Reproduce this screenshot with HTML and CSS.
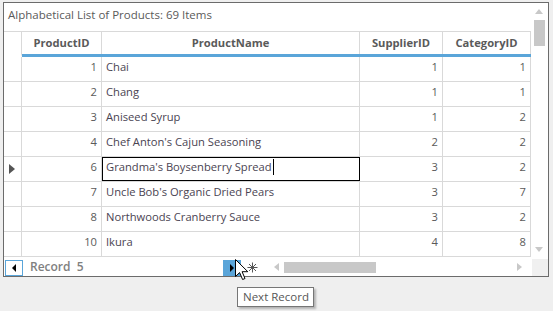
FILE: index.html
```html
<!DOCTYPE html>
<html lang="en">
<head>
    <meta charset="UTF-8">
    <title>Alphabetical List of Products</title>
    <link rel="stylesheet" href="styles.css">
</head>
<body>
    <div class="window">
        <div class="main">
            <div class="grid-area">
                <div class="caption">Alphabetical List of Products: 69 Items</div>

                <div class="row header">
                    <div class="cell c-sel"></div>
                    <div class="cell c-id">ProductID</div>
                    <div class="cell c-name">ProductName</div>
                    <div class="cell c-sup">SupplierID</div>
                    <div class="cell c-cat">CategoryID</div>
                </div>

                <div class="row">
                    <div class="cell c-sel"></div>
                    <div class="cell c-id">1</div>
                    <div class="cell c-name">Chai</div>
                    <div class="cell c-sup">1</div>
                    <div class="cell c-cat">1</div>
                </div>
                <div class="row">
                    <div class="cell c-sel"></div>
                    <div class="cell c-id">2</div>
                    <div class="cell c-name">Chang</div>
                    <div class="cell c-sup">1</div>
                    <div class="cell c-cat">1</div>
                </div>
                <div class="row">
                    <div class="cell c-sel"></div>
                    <div class="cell c-id">3</div>
                    <div class="cell c-name">Aniseed Syrup</div>
                    <div class="cell c-sup">1</div>
                    <div class="cell c-cat">2</div>
                </div>
                <div class="row">
                    <div class="cell c-sel"></div>
                    <div class="cell c-id">4</div>
                    <div class="cell c-name">Chef Anton's Cajun Seasoning</div>
                    <div class="cell c-sup">2</div>
                    <div class="cell c-cat">2</div>
                </div>
                <div class="row current">
                    <div class="cell c-sel"><span class="row-arrow"></span></div>
                    <div class="cell c-id">6</div>
                    <div class="cell c-name editing">Grandma's Boysenberry Spread<span class="caret"></span></div>
                    <div class="cell c-sup">3</div>
                    <div class="cell c-cat">2</div>
                </div>
                <div class="row">
                    <div class="cell c-sel"></div>
                    <div class="cell c-id">7</div>
                    <div class="cell c-name">Uncle Bob's Organic Dried Pears</div>
                    <div class="cell c-sup">3</div>
                    <div class="cell c-cat">7</div>
                </div>
                <div class="row">
                    <div class="cell c-sel"></div>
                    <div class="cell c-id">8</div>
                    <div class="cell c-name">Northwoods Cranberry Sauce</div>
                    <div class="cell c-sup">3</div>
                    <div class="cell c-cat">2</div>
                </div>
                <div class="row">
                    <div class="cell c-sel"></div>
                    <div class="cell c-id">10</div>
                    <div class="cell c-name">Ikura</div>
                    <div class="cell c-sup">4</div>
                    <div class="cell c-cat">8</div>
                </div>
            </div>

            <div class="vscroll">
                <span class="arrow-up"></span>
                <div class="vthumb"></div>
                <span class="arrow-down"></span>
            </div>
        </div>

        <div class="navbar">
            <button class="nav-btn"><span class="tri-left"></span></button>
            <span class="record-label">Record&nbsp;&nbsp;5</span>
            <button class="nav-btn active"><span class="tri-right"></span></button>
            <svg class="new-row" width="11" height="11" viewBox="0 0 11 11">
                <path d="M5.5 0.5V10.5M0.5 5.5H10.5M2 2L9 9M9 2L2 9" stroke="#555" stroke-width="1" fill="none"/>
            </svg>
            <div class="hscroll">
                <span class="arrow-left"></span>
                <div class="hthumb"></div>
                <span class="arrow-right"></span>
            </div>
            <div class="corner"></div>
        </div>
    </div>

    <!-- mouse pointer and tooltip float over the grid -->
    <svg class="pointer" width="14" height="22" viewBox="0 0 14 22">
        <path d="M0.5 0.5V17.5L4.6 13.6L7.6 20.5L10 19.5L7.1 12.7H12.8Z" fill="#fff" stroke="#000" stroke-width="1" stroke-linejoin="miter"/>
    </svg>
    <div class="tooltip">Next Record</div>
</body>
</html>
```

FILE: styles.css
```css
:root {
    --grid-line: #d9d9d9;
    --frame: #6b6b6b;
    --accent: #5aa5d9;
    --text: #4a4452;
    --muted: #5a5a5a;
    --scroll: #c8c8c8;
}

body {
    margin: 0;
    background-color: #efefef;
    font-family: 'Open Sans', 'Noto Sans', sans-serif;
    font-size: 11.2px;
    color: var(--text);
}

.window {
    margin: 2px 0 0 3px;
    width: 544px;
    height: 273px;
    border: 1px solid var(--frame);
    background: white;
    display: flex;
    flex-direction: column;
}

.main {
    display: flex;
    height: 254px;
}

.grid-area {
    width: 527px;
}

.caption {
    height: 28px;
    line-height: 23px;
    padding-left: 4px;
    color: var(--muted);
    font-size: 11.5px;
}

.row {
    display: flex;
    height: 24px;
    border-bottom: 1px solid var(--grid-line);
}

.row.header {
    height: 22px;
    border-top: 1px solid var(--grid-line);
    border-bottom: 3px solid var(--accent);
    font-weight: 700;
    color: var(--muted);
}

.cell {
    box-sizing: border-box;
    border-right: 1px solid var(--grid-line);
    padding: 0 4px;
    line-height: 20px;
    white-space: nowrap;
    overflow: hidden;
}

.row.header .cell {
    text-align: center;
    line-height: 22px;
}

.row.header .c-sel {
    border-bottom: 3px solid white;
    height: 25px;
    overflow: visible;
}

.c-sel { width: 18px; position: relative; }
.c-id { width: 80px; text-align: right; color: var(--muted); }
.c-name { width: 258px; }
.c-sup { width: 83px; text-align: right; color: var(--muted); }
.c-cat { width: 88px; text-align: right; color: var(--muted); }

.editing {
    outline: 1px solid #000;
    outline-offset: -1px;
    border-right-color: #000;
    position: relative;
}

.caret {
    display: inline-block;
    width: 1px;
    height: 16px;
    background: #000;
    vertical-align: -4px;
    margin-left: 1px;
}

.row-arrow {
    position: absolute;
    left: 5px;
    top: 7px;
    border-style: solid;
    border-width: 5px 0 5px 6px;
    border-color: transparent transparent transparent #555;
}

.vscroll {
    width: 17px;
    position: relative;
    background: white;
}

.arrow-up,
.arrow-down {
    position: absolute;
    left: 4px;
    border-style: solid;
    border-color: transparent;
}

.arrow-up {
    top: 6px;
    border-width: 0 4.5px 5px 4.5px;
    border-bottom-color: var(--scroll);
}

.arrow-down {
    top: 244px;
    border-width: 5px 4.5px 0 4.5px;
    border-top-color: var(--scroll);
}

.vthumb {
    position: absolute;
    left: 3px;
    top: 17px;
    width: 11px;
    height: 26px;
    background: var(--scroll);
}

.navbar {
    flex: 1;
    display: flex;
    align-items: flex-end;
}

.nav-btn {
    box-sizing: border-box;
    width: 18px;
    height: 16px;
    margin: 0 0 0 1px;
    padding: 0;
    border: 1px solid var(--accent);
    background: white;
    display: flex;
    align-items: center;
    justify-content: center;
}

.nav-btn.active {
    margin-left: 0;
    width: 18px;
    background: var(--accent);
}

.tri-left,
.tri-right {
    border-style: solid;
    border-color: transparent;
}

.tri-left {
    border-width: 4px 4px 4px 0;
    border-right-color: #000;
}

.tri-right {
    border-width: 4px 0 4px 4px;
    border-left-color: #000;
}

.record-label {
    box-sizing: border-box;
    width: 200px;
    padding-left: 7px;
    font-weight: 600;
    font-size: 12px;
    color: #808080;
    line-height: 16px;
    margin-bottom: 1px;
}

.new-row {
    margin: 0 0 3px 6px;
}

.hscroll {
    position: relative;
    width: 270px;
    height: 18px;
    margin-left: 5px;
}

.arrow-left,
.arrow-right {
    position: absolute;
    top: 5px;
    border-style: solid;
    border-color: transparent;
}

.arrow-left {
    left: 11px;
    border-width: 4.5px 5px 4.5px 0;
    border-right-color: var(--scroll);
}

.arrow-right {
    left: 254px;
    border-width: 4.5px 0 4.5px 5px;
    border-left-color: var(--scroll);
}

.hthumb {
    position: absolute;
    left: 21px;
    top: 4px;
    width: 92px;
    height: 11px;
    background: var(--scroll);
}

.corner {
    width: 16px;
    height: 17px;
    background: #f0f0f0;
}

.pointer {
    position: absolute;
    left: 235px;
    top: 259px;
}

.tooltip {
    position: absolute;
    left: 237px;
    top: 287px;
    box-sizing: border-box;
    width: 77px;
    height: 20px;
    border: 1px solid #767676;
    background: white;
    color: #575757;
    font-size: 11.5px;
    line-height: 18px;
    padding-left: 5px;
    box-shadow: 2px 2px 2px rgba(0, 0, 0, 0.25);
}
```
